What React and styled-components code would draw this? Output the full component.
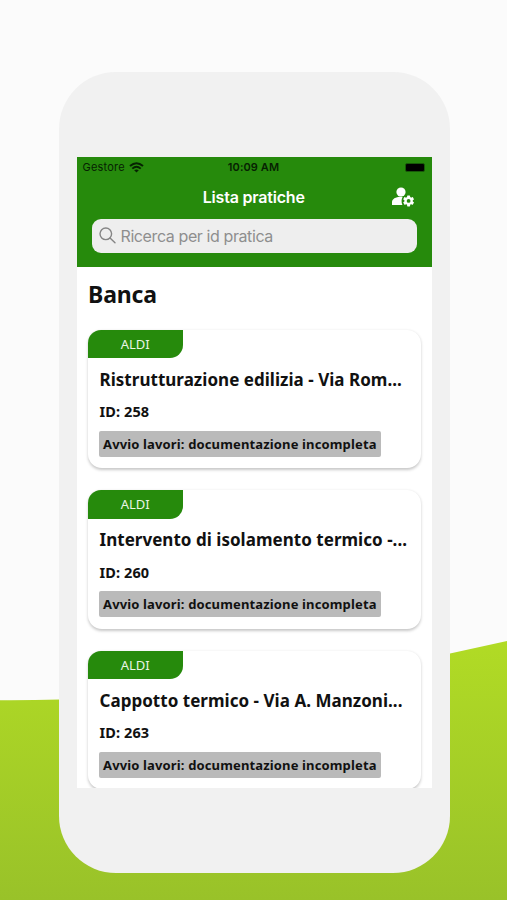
import React from 'react'
import styled, { createGlobalStyle } from 'styled-components'

const practices = [
    { id: 258, bank: 'ALDI', title: 'Ristrutturazione edilizia - Via Rom...' },
    { id: 260, bank: 'ALDI', title: 'Intervento di isolamento termico -...' },
    { id: 263, bank: 'ALDI', title: 'Cappotto termico - Via A. Manzoni...' },
]

const App = () => {
    return (
        <Page>
            <GlobalStyle/>
            <Hill viewBox="0 0 507 260" preserveAspectRatio="none">
                <defs>
                    <linearGradient id="hill" x1="0" y1="0" x2="0" y2="1">
                        <stop offset="0" stopColor="#b1db25"/>
                        <stop offset="1" stopColor="#99c229"/>
                    </linearGradient>
                </defs>
                <path d="M0 60.3Q30 60.5 60 59.5Q260 56 450 13.5L507 1V260H0Z" fill="url(#hill)"/>
            </Hill>
            <Phone>
                <Screen>
                    <Header>
                        <StatusBar>
                            <Carrier>
                                <span>Gestore</span>
                                <Wifi/>
                            </Carrier>
                            <Clock>10:09 AM</Clock>
                            <Battery/>
                        </StatusBar>
                        <NavBar>
                            <NavTitle>Lista pratiche</NavTitle>
                            <AccountButton>
                                <AccountIcon/>
                            </AccountButton>
                        </NavBar>
                        <SearchBox>
                            <SearchIcon/>
                            <span>Ricerca per id pratica</span>
                        </SearchBox>
                    </Header>
                    <Content>
                        <Heading>Banca</Heading>
                        {practices.map((item) => (
                            <Card key={item.id}>
                                <Tag>{item.bank}</Tag>
                                <CardTitle>{item.title}</CardTitle>
                                <CardId>ID: {item.id}</CardId>
                                <State>Avvio lavori: documentazione incompleta</State>
                            </Card>
                        ))}
                    </Content>
                </Screen>
            </Phone>
        </Page>
    )
}

const Wifi = () => (
    <svg width="15" height="11" viewBox="0 0 15 11" fill="none" stroke="#062202">
        <path d="M1 4.1Q7.5 -1.7 14 4.1" strokeWidth="2"/>
        <path d="M3.3 6.6Q7.5 2.8 11.7 6.6" strokeWidth="1.9"/>
        <path d="M7.5 10.6L5.2 8.3Q7.5 6.5 9.8 8.3Z" fill="#062202" stroke="none"/>
    </svg>
)

const AccountIcon = () => (
    <svg width="22" height="20" viewBox="0 0 22 20" fill="#fff">
        <circle cx="9" cy="5" r="4.6"/>
        <path d="M10.6 9.9C4 9.4 0 12 0 15.3V18H10.4C9.3 15 9.3 12.3 10.6 9.9Z"/>
        {[0, 60, 120].map((deg) => (
            <rect key={deg} x="15.1" y="8.4" width="3" height="11" rx="0.6" transform={`rotate(${deg} 16.6 13.9)`}/>
        ))}
        <circle cx="16.6" cy="13.9" r="4.2"/>
        <circle cx="16.6" cy="13.9" r="1.9" fill="#268a0c"/>
    </svg>
)

const SearchIcon = () => (
    <svg width="17" height="17" viewBox="0 0 17 17" fill="none" stroke="#858585" strokeWidth="1.4">
        <circle cx="6.8" cy="6.8" r="5.8"/>
        <path d="M11 11L16 15.8" strokeLinecap="round"/>
    </svg>
)

export default App

const GlobalStyle = createGlobalStyle`
body{
    margin:0;
    background:#fbfbfb;
}
*{
    box-sizing:border-box;
}
`
const Page = styled.div`
position:relative;
width:507px;
height:900px;
padding:71.5px 57px 0 58.5px;
background:#fbfbfb;
overflow:hidden;
font-family:"Noto Sans",sans-serif;
`
const Hill = styled.svg`
position:absolute;
left:0;
bottom:0;
width:507px;
height:260px;
`
const Phone = styled.div`
position:relative;
height:801.5px;
padding:85.5px 18.5px 0 18px;
border-radius:57px;
background:#f1f1f1;
`
const Screen = styled.div`
height:631px;
background:#fff;
overflow:hidden;
`
const Header = styled.div`
height:109.6px;
background:#268a0c;
font-family:Inter,sans-serif;
`
const StatusBar = styled.div`
display:grid;
grid-template-columns:1fr auto 1fr;
align-items:center;
height:20px;
padding:0 7px 0 6px;
color:#062202;
font-size:11px;
`
const Carrier = styled.div`
display:flex;
align-items:center;
gap:4px;
letter-spacing:0.2px;
`
const Clock = styled.div`
font-weight:600;
letter-spacing:0.1px;
`
const Battery = styled.div`
justify-self:end;
width:20px;
height:9px;
border:1px solid #175a08;
border-radius:2px;
background:#000;
`
const NavBar = styled.div`
display:grid;
grid-template-columns:1fr auto 1fr;
align-items:center;
height:41.5px;
padding:0 17.5px 0 17px;
color:#fff;
`
const NavTitle = styled.div`
grid-column:2;
padding-bottom:2px;
font-size:16px;
font-weight:600;
line-height:38px;
letter-spacing:-0.2px;
`
const AccountButton = styled.div`
display:flex;
justify-self:end;
padding-bottom:1px;
`
const SearchBox = styled.div`
display:flex;
align-items:center;
gap:5px;
height:34px;
margin:0 15px;
padding:0 7px;
border-radius:9px;
background:#eee;
color:#8e8e8e;
font-size:16px;
letter-spacing:-0.4px;
`
const Content = styled.div`
padding:11px 11px 0 11.5px;
color:#111;
`
const Heading = styled.div`
height:52px;
font-size:23px;
font-weight:700;
line-height:32px;
letter-spacing:-0.15px;
`
const Card = styled.div`
height:138.5px;
margin-bottom:22px;
border-radius:14px;
background:#fff;
box-shadow:0 1.5px 3px rgba(0,0,0,0.22);
`
const Tag = styled.div`
display:flex;
align-items:center;
justify-content:center;
width:94.5px;
height:28.5px;
border-radius:13px 0 13px 0;
background:#268a0c;
color:#e9f5e6;
font-size:13px;
`
const CardTitle = styled.div`
margin:8.5px 11.5px 0;
font-size:17px;
font-weight:700;
line-height:25px;
letter-spacing:0.03px;
white-space:nowrap;
`
const CardId = styled.div`
margin:7.5px 11.5px 0;
font-size:14.5px;
font-weight:700;
line-height:24px;
letter-spacing:0.1px;
`
const State = styled.div`
width:282px;
height:26px;
margin:7.5px 11px 0;
padding-left:4px;
border-radius:2px;
background:#bababa;
font-size:13px;
font-weight:700;
line-height:26px;
letter-spacing:0.14px;
white-space:nowrap;
`
